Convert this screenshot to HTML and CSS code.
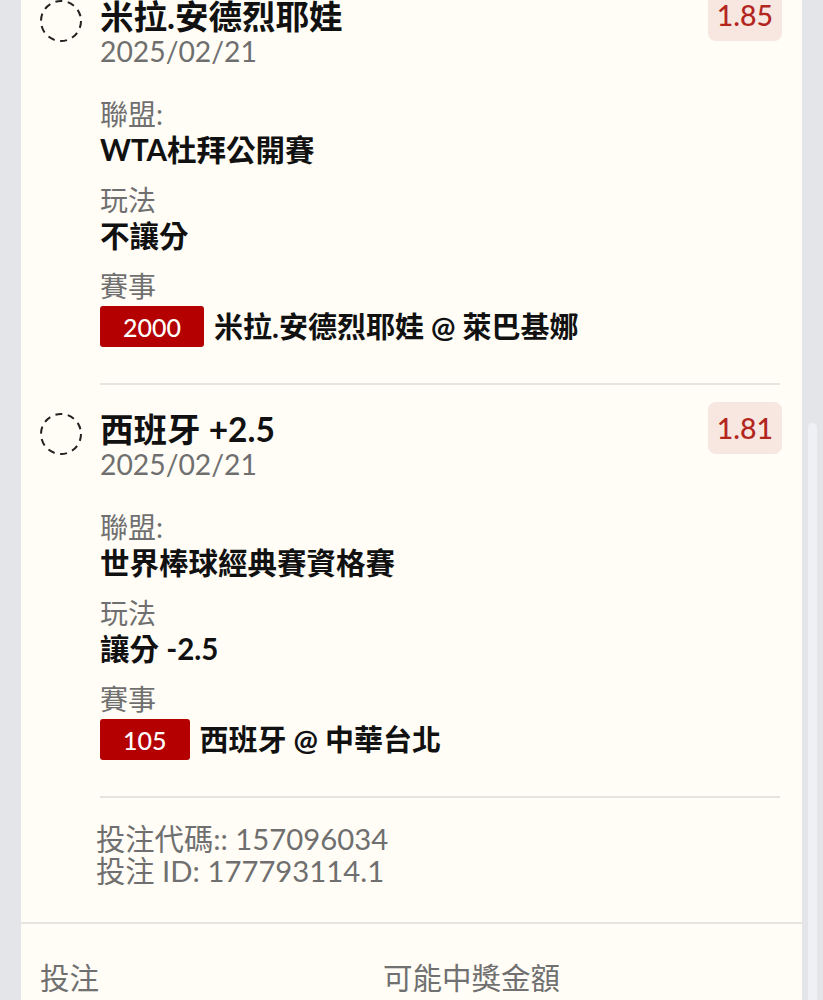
FILE: index.html
```html
<!DOCTYPE html>
<html lang="zh-Hant">
<head>
<meta charset="utf-8">
<title>投注明細</title>
<link rel="stylesheet" href="styles.css">
</head>
<body>
<div class="card">
  <div class="legs">
    <div class="leg">
      <svg class="status" width="42" height="42" viewBox="0 0 42 42"><circle cx="21" cy="21" r="20" fill="none" stroke="#222" stroke-width="2" stroke-dasharray="7 5.566"/></svg>
      <div class="leg-main">
        <div class="leg-head">
          <div class="leg-title">
            <div class="pick">米拉.安德烈耶娃</div>
            <div class="date">2025/02/21</div>
          </div>
          <div class="odds">1.85</div>
        </div>
        <div class="field">
          <div class="label">聯盟:</div>
          <div class="value">WTA杜拜公開賽</div>
        </div>
        <div class="field">
          <div class="label">玩法</div>
          <div class="value">不讓分</div>
        </div>
        <div class="field">
          <div class="label">賽事</div>
          <div class="event"><span class="code">2000</span><span class="value match">米拉.安德烈耶娃 @ 萊巴基娜</span></div>
        </div>
      </div>
    </div>
    <div class="leg">
      <svg class="status" width="42" height="42" viewBox="0 0 42 42"><circle cx="21" cy="21" r="20" fill="none" stroke="#222" stroke-width="2" stroke-dasharray="7 5.566"/></svg>
      <div class="leg-main">
        <div class="leg-head">
          <div class="leg-title">
            <div class="pick">西班牙 +2.5</div>
            <div class="date">2025/02/21</div>
          </div>
          <div class="odds">1.81</div>
        </div>
        <div class="field">
          <div class="label">聯盟:</div>
          <div class="value">世界棒球經典賽資格賽</div>
        </div>
        <div class="field">
          <div class="label">玩法</div>
          <div class="value">讓分 -2.5</div>
        </div>
        <div class="field">
          <div class="label">賽事</div>
          <div class="event"><span class="code">105</span><span class="value match">西班牙 @ 中華台北</span></div>
        </div>
      </div>
    </div>
    <div class="ids">
      <div>投注代碼:: 157096034</div>
      <div>投注 ID: 177793114.1</div>
    </div>
  </div>
  <div class="totals">
    <div class="total">
      <div class="label big">投注</div>
      <div class="value">NTD 300</div>
    </div>
    <div class="total">
      <div class="label big">可能中獎金額</div>
      <div class="value">NTD 1,005</div>
    </div>
  </div>
</div>
<div class="scrollbar"></div>
</body>
</html>
```

FILE: styles.css
```css
html, body {
  margin: 0;
  padding: 0;
  background: #e4e5e9;
  height: 1000px;
  overflow: hidden;
}
body {
  font-family: Lato, "Noto Sans CJK TC", sans-serif;
  color: #111;
}
.card {
  margin: -28px 21px 0 21px;
  background: #fffdf6;
}
.legs {
  padding: 0 22px 35px 19px;
}
.leg {
  display: grid;
  grid-template-columns: 42px 1fr;
  column-gap: 18px;
  align-items: start;
}
.status {
  display: block;
  margin-top: 28px;
}
.leg-main {
  padding: 25px 0 36px;
  border-bottom: 2px solid #e6e4df;
}
.leg-head {
  display: flex;
  justify-content: space-between;
  align-items: flex-start;
}
.pick {
  font-size: 33.5px;
  line-height: 38px;
  font-weight: 700;
  color: #111;
}
.date {
  font-size: 28.3px;
  line-height: 32px;
  color: #6f6f6f;
}
.odds {
  margin-top: -8px;
  margin-right: -2px;
  padding: 8px 9px;
  font-size: 28.5px;
  line-height: 36px;
  font-weight: 500;
  color: #b3261e;
  background: #f8e7e1;
  border-radius: 8px;
}
.field {
  margin-top: 14px;
}
.leg-head + .field {
  margin-top: 29px;
}
.label {
  font-size: 28px;
  line-height: 36px;
  color: #707070;
}
.label.big {
  font-size: 29.5px;
}
.value {
  font-size: 29.5px;
  line-height: 36px;
  font-weight: 700;
  color: #111;
}
.value.match {
  font-size: 29px;
}
.event {
  display: flex;
  align-items: center;
  margin-top: 2px;
}
.code {
  display: inline-flex;
  align-items: center;
  height: 41px;
  padding: 0 23px;
  background: #b40000;
  color: #fff;
  font-size: 25px;
  font-weight: 500;
  border-radius: 3px;
  margin-right: 10px;
}
.ids {
  padding: 25px 0 0 56px;
  font-size: 29.3px;
  line-height: 32px;
  color: #6f6f6f;
}
.totals {
  display: grid;
  grid-template-columns: 343px 1fr;
  padding: 36px 22px 0 19px;
  border-top: 2px solid #e6e4df;
}
.scrollbar {
  position: fixed;
  right: 6px;
  top: 423px;
  width: 9px;
  bottom: 0;
  background: #eef0f6;
  border-radius: 5px 5px 0 0;
}
```
